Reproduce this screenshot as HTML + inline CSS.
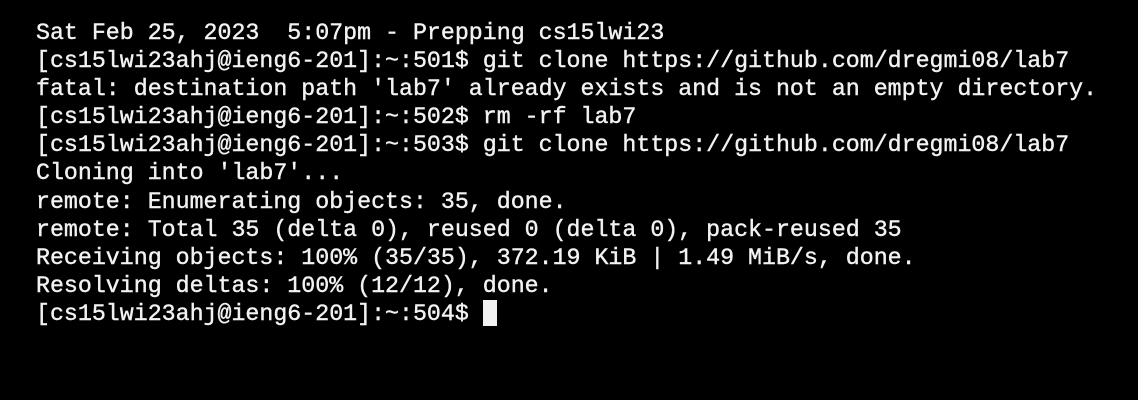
<!DOCTYPE html>
<html><head><meta charset="utf-8"><style>
html,body{margin:0;padding:0;background:#000;width:1138px;height:400px;overflow:hidden}
pre{position:absolute;left:36px;top:19px;margin:0;color:#f2f2f2;font-family:"Liberation Mono","DejaVu Sans Mono",monospace;font-size:23.27px;line-height:28.1px;white-space:pre;-webkit-text-stroke:0.4px #f2f2f2}
.cur{position:absolute;left:483px;top:300px;width:14px;height:26px;background:#f2f2f2}
</style></head><body>
<pre>Sat Feb 25, 2023  5:07pm - Prepping cs15lwi23
[cs15lwi23ahj@ieng6-201]:~:501$ git clone https://github.com/dregmi08/lab7
fatal: destination path 'lab7' already exists and is not an empty directory.
[cs15lwi23ahj@ieng6-201]:~:502$ rm -rf lab7
[cs15lwi23ahj@ieng6-201]:~:503$ git clone https://github.com/dregmi08/lab7
Cloning into 'lab7'...
remote: Enumerating objects: 35, done.
remote: Total 35 (delta 0), reused 0 (delta 0), pack-reused 35
Receiving objects: 100% (35/35), 372.19 KiB | 1.49 MiB/s, done.
Resolving deltas: 100% (12/12), done.
[cs15lwi23ahj@ieng6-201]:~:504$ </pre>
<div class="cur"></div>
</body></html>
